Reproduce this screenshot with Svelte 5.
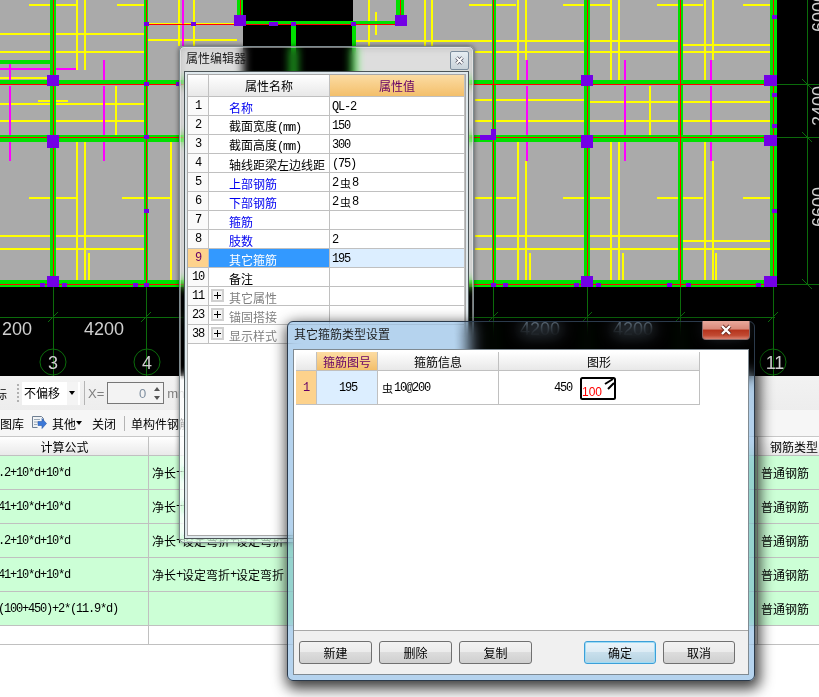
<script>
  // canvas data, all as x,y,w,h in drawing pixels
  const axes = [53, 146, 493, 587, 680, 773];
  const greens = [
    [50, 0, 6, 287], [144, 0, 4, 287], [237, 0, 6, 24], [396, 0, 8, 24],
    [291, 25, 5, 60], [352, 25, 4, 60], [492, 0, 4, 287], [584, 0, 6, 287],
    [678, 0, 5, 287], [770, 0, 7, 287],
    [0, 60, 50, 4], [0, 80, 777, 4], [0, 135, 777, 7], [0, 280, 777, 7], [243, 21, 155, 4],
  ];
  const yellowH = [
    [29, 4, 47], [117, 4, 27], [469, 4, 47], [563, 4, 47], [657, 4, 46], [743, 4, 27],
    [0, 33, 144], [0, 51, 144], [0, 77, 50], [0, 103, 144], [0, 120, 144],
    [29, 197, 47], [122, 197, 48], [475, 197, 41], [563, 197, 47], [657, 197, 46], [743, 197, 30],
    [0, 235, 144], [0, 248, 144], [148, 23, 90], [148, 39, 89], [356, 40, 120], [475, 40, 203],
    [683, 44, 87], [475, 51, 295], [475, 99, 110], [590, 101, 180], [475, 120, 295],
    [475, 235, 203], [683, 240, 87], [475, 248, 295], [38, 100, 30],
  ];
  const yellowV = [
    [76, 0, 70], [76, 142, 138], [84, 0, 70], [84, 142, 138], [115, 86, 49], [170, 142, 138],
    [178, 0, 46], [193, 0, 46], [88, 253, 27], [368, 0, 46], [375, 12, 23], [424, 0, 46], [431, 0, 46],
    [517, 0, 80], [517, 142, 138], [525, 0, 60], [525, 161, 119], [610, 0, 80], [610, 142, 138],
    [618, 0, 80], [618, 142, 138], [704, 0, 80], [704, 142, 138], [712, 0, 60], [712, 161, 119],
    [649, 86, 49], [529, 253, 27], [622, 253, 27], [715, 253, 27],
  ];
  const magentaV = [
    [9, 64, 16], [9, 86, 49], [9, 142, 19], [103, 60, 20], [103, 86, 49], [103, 142, 19],
    [526, 60, 20], [526, 86, 49], [526, 142, 19], [624, 60, 20], [624, 86, 49], [624, 142, 19],
    [710, 60, 20], [710, 86, 49], [710, 142, 19], [182, 0, 46],
  ];
  const columns = [
    [47, 75, 12, 11], [47, 135, 12, 13], [47, 276, 12, 11], [234, 15, 12, 11], [395, 15, 12, 11],
    [581, 75, 12, 11], [581, 135, 12, 13], [581, 276, 12, 11], [764, 75, 13, 11], [764, 135, 13, 11],
    [764, 276, 13, 11], [491, 129, 5, 11], [480, 135, 16, 5],
  ];
  const smalls = [
    [144, 22], [191, 22], [269, 22], [273, 22], [291, 22], [351, 22], [144, 82], [176, 82], [144, 135], [144, 209],
    [40, 283], [62, 283], [133, 283], [144, 283], [491, 283], [503, 283], [574, 283], [596, 283],
    [667, 283], [686, 283], [756, 283], [772, 15], [772, 93], [772, 124], [772, 209],
  ];
  const spans = ["200", "4200"];

  const props = [
    { no: "1", name: "名称", value: "QL-2", blue: true },
    { no: "2", name: "截面宽度(mm)", value: "150" },
    { no: "3", name: "截面高度(mm)", value: "300" },
    { no: "4", name: "轴线距梁左边线距", value: "(75)" },
    { no: "5", name: "上部钢筋", value: "2虫8", blue: true },
    { no: "6", name: "下部钢筋", value: "2虫8", blue: true },
    { no: "7", name: "箍筋", value: "", blue: true },
    { no: "8", name: "肢数", value: "2", blue: true },
    { no: "9", name: "其它箍筋", value: "195", selected: true },
    { no: "10", name: "备注", value: "" },
    { no: "11", name: "其它属性", value: "", group: true },
    { no: "23", name: "锚固搭接", value: "", group: true },
    { no: "38", name: "显示样式", value: "", group: true },
  ];

  const rebars = [
    { formula: ".2+10*d+10*d", note: "净长+设定弯折+设定弯折" },
    { formula: "41+10*d+10*d", note: "净长+设定弯折+设定弯折" },
    { formula: ".2+10*d+10*d", note: "净长+设定弯折+设定弯折" },
    { formula: "41+10*d+10*d", note: "净长+设定弯折+设定弯折" },
    { formula: "(100+450)+2*(11.9*d)", note: "" },
  ];

  // latin runs are narrower than the CJK font's, so they get their own span
  const runs = (s) => s.match(/[\x00-\x7f]+|[^\x00-\x7f]+/g) || [];
</script>

{#snippet txt(s)}
  {#each runs(s) as r}
    {#if r.charCodeAt(0) < 128}<span class="latin">{r}</span>{:else}<span class:rebar={r === "虫"}>{r}</span>{/if}
  {/each}
{/snippet}

<div class="app">
  <svg class="cad" width="819" height="376" viewBox="0 0 819 376" shape-rendering="crispEdges">
    <rect width="819" height="376" fill="#000" />
    <rect width="777" height="287" fill="#aaa" />
    <rect x="243" width="110" height="80" fill="#000" />

    {#each yellowH as [x, y, w]}<rect {x} {y} width={w} height="2" fill="#ff0" />{/each}
    {#each yellowV as [x, y, h]}<rect {x} {y} width="2" height={h} fill="#ff0" />{/each}
    {#each magentaV as [x, y, h]}<rect {x} {y} width="2" height={h} fill="#f0f" />{/each}
    <rect y="68" width="76" height="2" fill="#f0f" />

    {#each greens as [x, y, width, height]}<rect {x} {y} {width} {height} fill="#00e000" />{/each}

    {#each [...axes, 240, 400] as x}
      <rect {x} width="1" height={x === 240 || x === 400 ? 24 : 287} fill="#f00" />
    {/each}
    <rect y="84" width="777" height="1" fill="#f00" />
    <rect y="137" width="777" height="1" fill="#f00" />
    <rect y="284" width="777" height="1" fill="#f00" />
    <rect x="144" y="24" width="260" height="1" fill="#f00" />

    {#each columns as [x, y, width, height]}<rect {x} {y} {width} {height} fill="#7300e6" />{/each}
    {#each smalls as [x, y]}<rect {x} {y} width="5" height="4" fill="#7300e6" />{/each}

    <g stroke="#0b6b0b" fill="none">
      <path d="M0 317.5H775M807.5 0V284M777 84.5H819M777 137.5H819M777 284.5H819" />
      {#each axes as x}
        <path d="M{x + 0.5} 287V376" />
      {/each}
      <path shape-rendering="auto" d="M48 322l10-10M141 322l10-10M488 322l10-10M582 322l10-10M675 322l10-10M768 322l10-10M802 79l10 10M802 132l10 10M802 279l10 10" />
      <circle shape-rendering="auto" cx="53" cy="362" r="13" />
      <circle shape-rendering="auto" cx="147" cy="362" r="13" />
      <circle shape-rendering="auto" cx="773" cy="362" r="13" />
    </g>

    <g class="dim">
      <text x="2" y="335">{spans[0]}</text>
      <text x="84" y="335">{spans[1]}</text>
      <text x="520" y="335">{spans[1]}</text>
      <text x="613" y="335">{spans[1]}</text>
      <text x="706" y="335">{spans[1]}</text>
      <text x="53" y="369" text-anchor="middle">3</text>
      <text x="147" y="369" text-anchor="middle">4</text>
      <text x="775" y="369" text-anchor="middle">11</text>
      <text transform="translate(825 32) rotate(-90)">6000</text>
      <text transform="translate(825 126) rotate(-90)">2400</text>
      <text transform="translate(825 227) rotate(-90)">6600</text>
    </g>
  </svg>

  <div class="bar bar1">
    <span class="cut">标</span>
    <i class="grip"></i>
    <div class="combo">不偏移<i class="caret"></i></div>
    <i class="sep"></i>
    <span class="muted latin-x">X=</span>
    <div class="spin">
      <span class="zero">0</span>
      <span class="arrows"><i class="up"></i><i class="down"></i></span>
    </div>
    <span class="muted latin-x">mm</span>
  </div>

  <div class="bar bar2">
    <span>图库</span>
    <svg class="other-icon" width="16" height="16" viewBox="0 0 16 16">
      <path d="M1.5 1.5h9l2 2v3M1.5 1.5v11h5" fill="#eef2f6" stroke="#6f7f92" />
      <path d="M3 4.5h6M3 7h4M3 9.5h3" stroke="#9aa8b6" />
      <path d="M7 6.5h4V3.5l4.5 5-4.5 5v-3H7z" fill="#3c78d8" stroke="#2a5aa8" stroke-width=".6" />
    </svg>
    <span class="other">其他<i class="caret small"></i></span>
    <span class="close-label">关闭</span>
    <i class="sep tall"></i>
    <span>单构件钢筋</span>
  </div>

  <div class="sheet">
    <div class="head">计算公式</div>
    <div class="head"></div>
    <div class="head type">钢筋类型</div>
    {#each rebars as row}
      <div class="cell formula"><span class="latin">{row.formula}</span></div>
      <div class="cell">{@render txt(row.note)}</div>
      <div class="cell">普通钢筋</div>
    {/each}
    <div class="cell blank"></div>
    <div class="cell blank"></div>
    <div class="cell blank"></div>
  </div>

  <!-- property editor window -->
  <div class="win editor">
    <div class="glass"></div>
    <div class="body">
      <div class="title">属性编辑器</div>
      <button class="x-small" aria-label="关闭">
        <svg width="11" height="11" viewBox="0 0 11 11">
          <path d="M2.5 2.5l6 6M8.5 2.5l-6 6" stroke="#556" stroke-width="3.4" />
          <path d="M2.5 2.5l6 6M8.5 2.5l-6 6" stroke="#fff" stroke-width="1.8" />
        </svg>
      </button>
      <div class="frame">
        <div class="inner">
          <div class="props">
            <div class="ph"></div>
            <div class="ph">属性名称</div>
            <div class="ph on">属性值</div>
            {#each props as p}
              <div class="no" class:sel={p.selected}><span class="latin">{p.no}</span></div>
              <div class="name" class:blue={p.blue} class:chosen={p.selected} class:group={p.group}>
                {#if p.group}<i class="plus"></i>{/if}
                <span class="label">{@render txt(p.name)}</span>
              </div>
              <div class="val" class:picked={p.selected}>{@render txt(p.value)}</div>
            {/each}
          </div>
        </div>
      </div>
    </div>
  </div>

  <!-- stirrup type dialog -->
  <div class="win stirrup">
    <div class="glass"></div>
    <div class="tint"></div>
    <div class="body">
      <div class="title">其它箍筋类型设置</div>
      <button class="x-red" aria-label="关闭">
        <svg width="16" height="12" viewBox="0 0 16 12">
          <path d="M4 2l8 8M12 2l-8 8" stroke="#6b2a20" stroke-width="4" />
          <path d="M4 2l8 8M12 2l-8 8" stroke="#fff" stroke-width="2.4" />
        </svg>
      </button>
      <div class="frame">
        <div class="inner">
          <div class="types">
            <div class="ph"></div>
            <div class="ph on">箍筋图号</div>
            <div class="ph">箍筋信息</div>
            <div class="ph">图形</div>
            <div class="no sel"><span class="latin">1</span></div>
            <div class="val picked center"><span class="latin">195</span></div>
            <div class="val">{@render txt("虫10@200")}</div>
            <div class="val shape">
              <span class="latin">450</span>
              <svg width="36" height="23" viewBox="0 0 36 23">
                <rect x="1" y="1" width="34" height="21" rx="1.5" fill="#fff" stroke="#000" stroke-width="2" />
                <path d="M25 7l8-5M28 12l6-6" stroke="#000" stroke-width="2" />
                <text x="2" y="19" class="red">100</text>
              </svg>
            </div>
          </div>
        </div>
        <div class="actions">
          <button class="btn">新建</button>
          <button class="btn">删除</button>
          <button class="btn">复制</button>
          <button class="btn primary">确定</button>
          <button class="btn narrow">取消</button>
        </div>
      </div>
    </div>
  </div>
</div>

<style>
  :global(body) {
    background: #fff;
  }
  * {
    box-sizing: border-box;
  }
  .app {
    position: relative;
    width: 819px;
    height: 697px;
    overflow: hidden;
    background: #fff;
    font: 12px "Noto Sans CJK SC", sans-serif;
    color: #000;
  }
  .latin {
    font: 12px "Liberation Mono", monospace;
    letter-spacing: -1.2px;
  }
  .rebar {
    font-size: 11px;
    margin: 0 1px 0 2px;
  }
  .cad {
    display: block;
  }
  .dim text {
    font: 18px "Liberation Sans", sans-serif;
    fill: #cfcfcf;
  }

  .bar {
    display: flex;
    align-items: center;
    white-space: nowrap;
    overflow: hidden;
  }
  .bar1 {
    height: 34px;
    background: linear-gradient(#f2f2f2, #ededed);
  }
  .bar2 {
    height: 27px;
    background: #f6f6f6;
    border-bottom: 1px solid #c8c8c8;
  }
  .cut {
    margin-left: -5px;
    width: 22px;
    flex: none;
  }
  .grip {
    width: 2px;
    height: 18px;
    margin-right: 3px;
    background: repeating-linear-gradient(#b0b0b0 0 2px, transparent 2px 4px);
  }
  .combo {
    position: relative;
    width: 58px;
    height: 23px;
    line-height: 21px;
    padding-left: 2px;
    background: #fff;
  }
  .caret {
    position: absolute;
    right: 2px;
    top: 0;
    width: 11px;
    height: 100%;
    background: #f4f4f4;
  }
  .caret::after {
    content: "";
    position: absolute;
    left: 2px;
    top: 9px;
    border: 3px solid transparent;
    border-top: 4px solid #000;
  }
  .sep {
    width: 1px;
    height: 24px;
    margin: 0 3px 0 4px;
    background: #b4b4b4;
  }
  .muted {
    color: #808080;
  }
  .latin-x {
    font: 13px "Liberation Sans", sans-serif;
  }
  .spin {
    display: flex;
    align-items: center;
    justify-content: flex-end;
    width: 57px;
    height: 22px;
    margin: 0 3px;
    border: 1px solid #777;
    background: #f3f3f3;
  }
  .zero {
    font: 13px "Liberation Sans", sans-serif;
    color: #7f8fa0;
    margin-right: 8px;
  }
  .arrows {
    display: flex;
    flex-direction: column;
    gap: 5px;
    margin-right: 3px;
  }
  .up {
    border: 3px solid transparent;
    border-top: 0;
    border-bottom: 4px solid #555;
  }
  .down {
    border: 3px solid transparent;
    border-bottom: 0;
    border-top: 4px solid #555;
  }
  .other-icon {
    margin: 0 5px 0 7px;
    flex: none;
  }
  .other {
    position: relative;
    width: 40px;
    flex: none;
  }
  .caret.small {
    right: 8px;
    width: 9px;
    background: none;
  }
  .caret.small::after {
    left: 1px;
    top: 6px;
  }
  .sep.tall {
    height: 15px;
    margin: 0 6px 0 8px;
  }

  .sheet {
    display: grid;
    grid-template-columns: 168px 609px 70px;
    grid-auto-rows: 34px;
    grid-template-rows: 19px;
    margin-left: -19px;
  }
  .head {
    display: flex;
    align-items: center;
    justify-content: center;
    background: linear-gradient(#fff, #e9e9e9);
    border-right: 1px solid #c0c0c0;
    border-bottom: 1px solid #c0c0c0;
  }
  .head.type {
    justify-content: flex-start;
    padding-left: 12px;
    border-right: 0;
  }
  .cell {
    display: flex;
    align-items: center;
    padding-left: 3px;
    background: #ccffd6;
    border-right: 1px solid #c0c0c0;
    border-bottom: 1px solid #c0c0c0;
    white-space: nowrap;
    overflow: hidden;
  }
  .formula {
    padding-left: 17px;
  }
  .cell.blank {
    height: 19px;
    background: #fff;
  }

  .win {
    position: absolute;
    border-radius: 5px;
  }
  .glass,
  .tint {
    position: absolute;
    inset: 0;
    border-radius: inherit;
  }
  .body {
    position: relative;
    display: flex;
    flex-direction: column;
    height: 100%;
  }
  .title {
    position: absolute;
    color: #1c1c1c;
    line-height: 16px;
  }
  .frame {
    flex: 1;
    display: flex;
    flex-direction: column;
    min-height: 0;
    background: #fff;
  }
  .inner {
    flex: 1;
    background: #fff;
    min-height: 0;
  }

  .editor {
    left: 179px;
    top: 46px;
    width: 295px;
    height: 497px;
  }
  .editor .glass {
    border: 1px solid #7d8a8f;
    backdrop-filter: blur(5px) brightness(1.3) saturate(0.75);
    box-shadow: 0 0 5px rgba(0, 0, 0, 0.55), inset 0 0 0 1px rgba(255, 255, 255, 0.45);
  }
  .editor .body {
    padding: 25px 5px 4px;
  }
  .editor .title {
    left: 7px;
    top: 4px;
  }
  .x-small {
    position: absolute;
    right: 5px;
    top: 5px;
    display: flex;
    align-items: center;
    justify-content: center;
    width: 19px;
    height: 19px;
    padding: 0;
    border: 1px solid #7b8c9c;
    border-radius: 2px;
    background: linear-gradient(#e6edf2, #c9d3da);
  }
  .editor .frame {
    border: 1px solid #4c5558;
    padding: 2px;
    background: #dfe8ec;
  }
  .editor .inner {
    border: 1px solid #a8a8a8;
  }

  .props {
    display: grid;
    grid-template-columns: 21px 121px 135px;
    grid-template-rows: 22px;
    grid-auto-rows: 19px;
  }
  .ph {
    display: flex;
    align-items: center;
    justify-content: center;
    background: linear-gradient(#fff, #e8e8e8);
    border-right: 1px solid #c0c0c0;
    border-bottom: 1px solid #c0c0c0;
  }
  .ph.on {
    background: linear-gradient(#fcdca3, #f3bf6b);
    color: #660066;
  }
  .no {
    display: flex;
    align-items: center;
    justify-content: center;
    background: #fafafa;
    border-right: 1px solid #c0c0c0;
    border-bottom: 1px solid #c0c0c0;
  }
  .no.sel {
    background: #fdd28c;
    color: #660066;
  }
  .name {
    position: relative;
    display: flex;
    align-items: center;
    padding: 2px 0 0 20px;
    white-space: nowrap;
    border-right: 1px solid #c0c0c0;
    border-bottom: 1px solid #c0c0c0;
  }
  .name.blue {
    color: #0000f0;
  }
  .name.chosen {
    background: #3399ff;
    color: #fff;
  }
  .name.group {
    color: #808080;
  }
  .plus {
    position: absolute;
    left: 2px;
    top: 2px;
    width: 13px;
    height: 13px;
    border: 2px solid #d0d0d0;
    background:
      linear-gradient(#000, #000) center / 7px 1px no-repeat,
      linear-gradient(#000, #000) center / 1px 7px no-repeat,
      #f4f4f4;
  }
  .val {
    display: flex;
    align-items: center;
    padding: 1px 0 0 2px;
    border-right: 1px solid #c0c0c0;
    border-bottom: 1px solid #c0c0c0;
    white-space: nowrap;
  }
  .val.picked {
    background: #dceeff;
  }
  .val.center {
    justify-content: center;
  }

  .stirrup {
    left: 287px;
    top: 321px;
    width: 468px;
    height: 360px;
    border-radius: 6px;
  }
  .stirrup .glass {
    backdrop-filter: blur(8px) brightness(1.05);
    box-shadow: 2px 5px 14px 3px rgba(0, 0, 0, 0.75);
    border: 1px solid #3c4650;
  }
  .tint {
    background: #b5d3ee;
    mix-blend-mode: multiply;
  }
  .stirrup .body {
    padding: 28px 6px 6px;
  }
  .stirrup .title {
    left: 7px;
    top: 5px;
  }
  .x-red {
    position: absolute;
    right: 5px;
    top: 0;
    display: flex;
    align-items: center;
    justify-content: center;
    width: 48px;
    height: 19px;
    padding: 0;
    border: 1px solid #8a6a6a;
    border-top: 0;
    border-radius: 0 0 4px 4px;
    background: linear-gradient(#e9a99c 0, #d98878 45%, #b5331c 50%, #c14a33 80%, #d9806e 100%);
  }
  .stirrup .frame {
    border: 1px solid #7f8a92;
  }
  .stirrup .inner {
    padding: 2px;
  }
  .types {
    display: grid;
    grid-template-columns: 21px 61px 121px 201px;
    grid-template-rows: 19px 34px;
    width: fit-content;
    border-left: 0;
  }
  .shape {
    justify-content: flex-end;
    gap: 8px;
    padding-right: 83px;
  }
  .red {
    font: 12px "Liberation Sans", sans-serif;
    fill: #f00;
  }
  .actions {
    display: flex;
    gap: 7px;
    height: 44px;
    padding: 10px 13px 0 5px;
    background: #f0f0f0;
    border-top: 1px solid #a8a8a8;
  }
  .btn {
    width: 73px;
    height: 23px;
    padding: 0;
    font: inherit;
    color: #000;
    border: 1px solid #707070;
    border-radius: 3px;
    background: linear-gradient(#f2f2f2 0, #ebebeb 48%, #dcdcdc 50%, #cfcfcf 100%);
  }
  .btn.primary {
    width: 72px;
    margin-left: auto;
    border-color: #3c9fd8;
    box-shadow: inset 0 0 0 1px #9fdcf5;
    background: linear-gradient(#eaf4fa 0, #dcebf4 48%, #c8dfec 50%, #b6d3e2 100%);
  }
  .btn.narrow {
    width: 72px;
  }
</style>
